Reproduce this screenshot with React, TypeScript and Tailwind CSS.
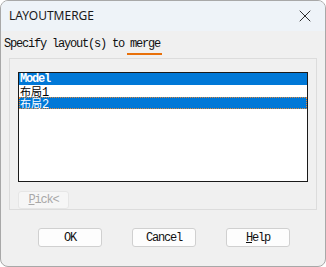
import { X } from "lucide-react";

const mono = "font-['Liberation_Mono','Noto_Sans_CJK_SC',monospace] text-[12px] tracking-[-1.2px]";
const cjk = "font-['Noto_Sans_CJK_SC',sans-serif] tracking-normal text-[11px]";

const DlgButton = ({ children }: { children: React.ReactNode }) => (
  <button className={`flex h-[19px] w-[64px] items-center justify-center rounded-[3px] border border-[#d0d0d0] bg-[#fdfdfd] text-[#111] ${mono}`}>
    {children}
  </button>
);

export default function App() {
  return (
    <div className="h-[267px] w-[326px] bg-white">
      <div className="flex h-[267px] w-[326px] flex-col overflow-hidden rounded-[8px] border border-[#a8a8a8] bg-[#f0f0f0]">
        {/* title bar */}
        <div className="flex h-[30px] shrink-0 items-center justify-between bg-[#eef3f8] pl-[8px] pr-[10px]">
          <span className="font-['Noto_Sans',sans-serif] text-[12px] text-[#1a1a1a]">LAYOUTMERGE</span>
          <X size={20} strokeWidth={1.1} className="text-[#1a1a1a]" />
        </div>

        <div className={`px-[3px] pt-[6px] leading-[14px] text-[#111] ${mono}`}>
          Specify layout(s) to{" "}
          <span className="relative">
            merge
            <span className="absolute left-[-3px] right-[-2px] top-[16px] h-[2px] bg-[#e8700a]" />
          </span>
        </div>

        {/* group box */}
        <div className="mx-[8px] mt-[7px] flex h-[152px] flex-col border border-[#dcdcdc] px-[8px] pt-[13px]">
          <div className="h-[110px] border border-[#1a1a1a] bg-white">
            <div className={`h-[12px] overflow-hidden bg-[#0078d7] pl-[1px] font-bold leading-[12px] text-white ${mono}`}>Model</div>
            <div className={`h-[12px] overflow-hidden pl-[1px] leading-[12px] text-black ${mono}`}>
              <span className={cjk}>布局</span>1
            </div>
            <div className={`h-[12px] overflow-hidden bg-[#0078d7] pl-[1px] leading-[12px] text-white outline-1 -outline-offset-1 outline-dotted outline-[#e0883a] ${mono}`}>
              <span className={cjk}>布局</span>2
            </div>
          </div>
          <button className={`mt-[9px] flex h-[18px] w-[51px] items-center justify-center rounded-[3px] border border-[#e6e6e6] bg-[#f6f6f6] text-[#a8a8a8] ${mono}`}>
            <span className="underline">P</span>ick&lt;
          </button>
        </div>

        {/* bottom buttons */}
        <div className="ml-[37px] mt-[18px] flex gap-[30px]">
          <DlgButton>OK</DlgButton>
          <DlgButton>Cancel</DlgButton>
          <DlgButton>
            <span className="underline">H</span>elp
          </DlgButton>
        </div>
      </div>
    </div>
  );
}
